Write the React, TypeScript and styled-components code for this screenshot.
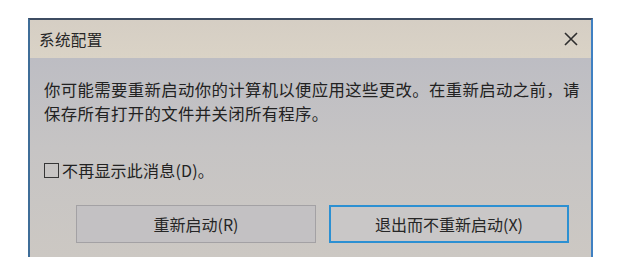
import React, { FC } from 'react';
import styled, { createGlobalStyle } from 'styled-components';

const GlobalStyle = createGlobalStyle`
  * {
    box-sizing: border-box;
  }

  body {
    margin: 0;
    background: #ffffff;
    font-family: "Noto Sans CJK SC", "Noto Sans", sans-serif;
  }
`;

const Page = styled.div`
  padding: 18px 0 0 28px;
`;

const Dialog = styled.div`
  width: 565px;
  height: 239px;
  border-top: 2px solid #3e4c62;
  border-left: 2px solid #3f6d98;
  border-right: 2px solid #3f80c2;
  display: flex;
  flex-direction: column;
  color: #222222;
`;

const TitleBar = styled.div`
  height: 38px;
  padding: 0 11px 0 9px;
  display: flex;
  align-items: center;
  justify-content: space-between;
  background: linear-gradient(180deg, #d5cec4 0%, #dad3c6 100%);
`;

const Title = styled.span`
  font-size: 15.5px;
  letter-spacing: 0.4px;
  color: #262626;
`;

const CloseButton = styled.button`
  width: 18px;
  height: 18px;
  padding: 0;
  border: none;
  background: transparent;
  display: flex;
  align-items: center;
  justify-content: center;
`;

const Body = styled.div`
  flex: 1;
  padding: 19px 10px 0 14px;
  display: flex;
  flex-direction: column;
  background: linear-gradient(180deg, #bdbdc3 0%, #c6c4c4 45%, #ccc8c3 100%);
`;

const Message = styled.div`
  font-size: 16.4px;
  line-height: 24px;
  letter-spacing: 0.35px;
`;

const MessageLine = styled.span`
  display: block;
  white-space: nowrap;
`;

const CheckRow = styled.label`
  margin-top: 36px;
  height: 18px;
  display: flex;
  align-items: center;
  gap: 3px;
  font-size: 16px;
  letter-spacing: 0.2px;
`;

const CheckBox = styled.span`
  width: 15px;
  height: 15px;
  border: 1.5px solid #363636;
  background: transparent;
`;

const ButtonRow = styled.div`
  margin-top: 26px;
  padding-left: 32px;
  display: flex;
  gap: 13px;
`;

const DialogButton = styled.button<{ $primary?: boolean }>`
  width: 240px;
  height: 38px;
  font-family: inherit;
  font-size: 16px;
  color: #262626;
  background: ${(p) => (p.$primary ? '#c9c7c7' : '#c3c1c3')};
  border: ${(p) => (p.$primary ? '2px solid #2c90d2' : '1px solid #a3a1a4')};
`;

const App: FC = () => (
  <Page>
    <GlobalStyle />
    <Dialog>
      <TitleBar>
        <Title>系统配置</Title>
        <CloseButton aria-label="关闭">
          <svg width="14" height="14" viewBox="0 0 14 14">
            <path d="M1 1 L13 13 M13 1 L1 13" stroke="#2e2e2e" strokeWidth="1.6" />
          </svg>
        </CloseButton>
      </TitleBar>
      <Body>
        <Message>
          <MessageLine>你可能需要重新启动你的计算机以便应用这些更改。在重新启动之前，请</MessageLine>
          <MessageLine>保存所有打开的文件并关闭所有程序。</MessageLine>
        </Message>
        <CheckRow>
          <CheckBox />
          不再显示此消息(D)。
        </CheckRow>
        <ButtonRow>
          <DialogButton>重新启动(R)</DialogButton>
          <DialogButton $primary>退出而不重新启动(X)</DialogButton>
        </ButtonRow>
      </Body>
    </Dialog>
  </Page>
);

export default App;
